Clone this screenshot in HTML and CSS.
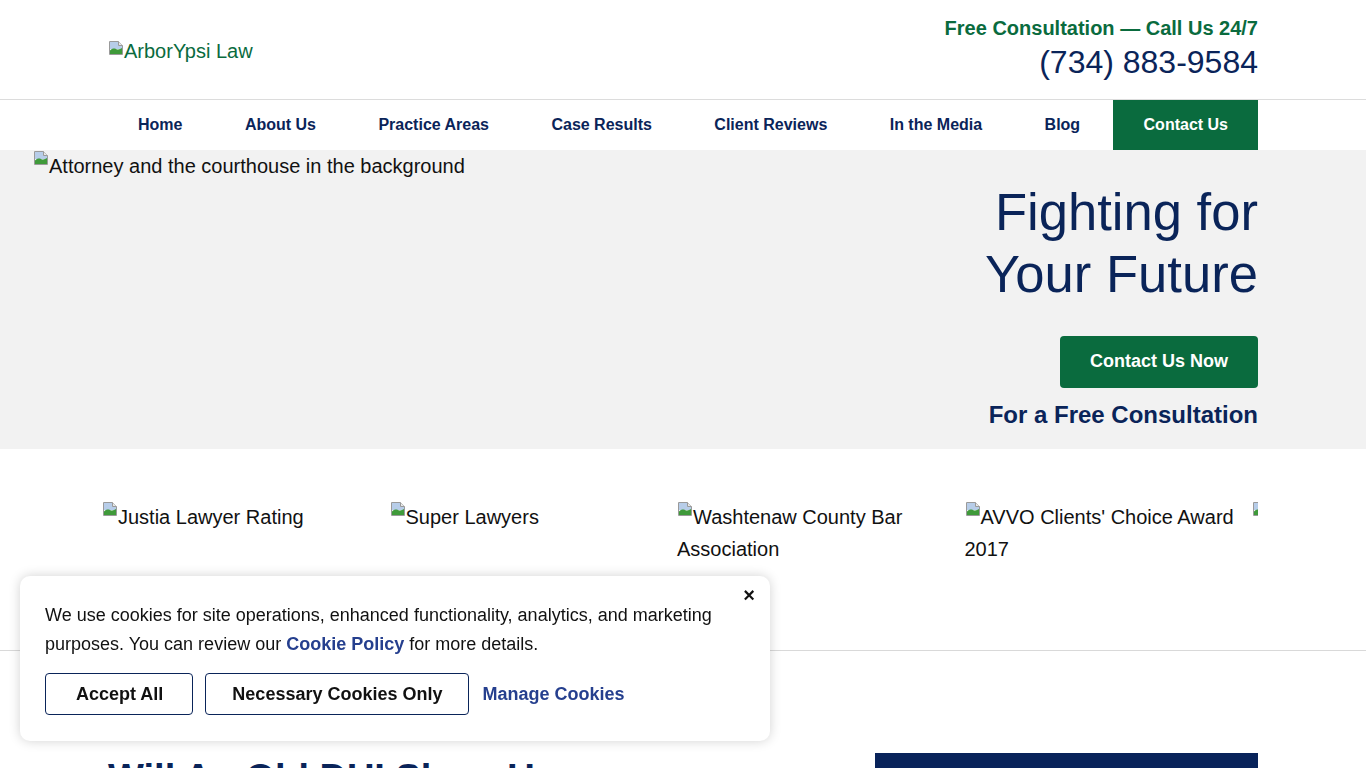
FILE: index.html
```html
<!DOCTYPE html>
<html lang="en">
<head>
<meta charset="utf-8">
<title>ArborYpsi Law</title>
<link rel="stylesheet" href="styles.css">
</head>
<body>
<header class="site-header">
  <div class="container header-inner">
    <a class="logo" href="#"><svg class="broken" viewBox="0 0 16 16" width="16" height="16"><path d="M1.5 1.5h9l4 4v9h-13z" fill="#fff" stroke="#9a9a9a"/><path d="M2 2h8.3l3.7 3.7V9H2z" fill="#b7cde9"/><path d="M2 14V10.5c2-2 4-2.5 6-1.5s4 .5 6-1V14z" fill="#3f9a3a"/><path d="M10.5 1.5v4h4" fill="#e8e8e8" stroke="#9a9a9a"/></svg>ArborYpsi Law</a>
    <div class="header-contact">
      <div class="consult">Free Consultation — Call Us 24/7</div>
      <a class="phone" href="#">(734) 883-9584</a>
    </div>
  </div>
</header>
<nav class="main-nav">
  <ul class="container nav-list">
    <li><a href="#">Home</a></li>
    <li><a href="#">About Us</a></li>
    <li><a href="#">Practice Areas</a></li>
    <li><a href="#">Case Results</a></li>
    <li><a href="#">Client Reviews</a></li>
    <li><a href="#">In the Media</a></li>
    <li><a href="#">Blog</a></li>
    <li class="nav-cta"><a href="#">Contact Us</a></li>
  </ul>
</nav>
<section class="hero">
  <div class="hero-img"><svg class="broken" viewBox="0 0 16 16" width="16" height="16"><path d="M1.5 1.5h9l4 4v9h-13z" fill="#fff" stroke="#9a9a9a"/><path d="M2 2h8.3l3.7 3.7V9H2z" fill="#b7cde9"/><path d="M2 14V10.5c2-2 4-2.5 6-1.5s4 .5 6-1V14z" fill="#3f9a3a"/><path d="M10.5 1.5v4h4" fill="#e8e8e8" stroke="#9a9a9a"/></svg>Attorney and the courthouse in the background</div>
  <div class="hero-content">
    <h1 class="hero-title">Fighting for<br>Your Future</h1>
    <a class="btn-green" href="#">Contact Us Now</a>
    <p class="hero-sub">For a Free Consultation</p>
  </div>
</section>
<section class="awards">
  <div class="container">
    <div class="awards-row">
      <div class="award"><svg class="broken" viewBox="0 0 16 16" width="16" height="16"><path d="M1.5 1.5h9l4 4v9h-13z" fill="#fff" stroke="#9a9a9a"/><path d="M2 2h8.3l3.7 3.7V9H2z" fill="#b7cde9"/><path d="M2 14V10.5c2-2 4-2.5 6-1.5s4 .5 6-1V14z" fill="#3f9a3a"/><path d="M10.5 1.5v4h4" fill="#e8e8e8" stroke="#9a9a9a"/></svg>Justia Lawyer Rating</div>
      <div class="award"><svg class="broken" viewBox="0 0 16 16" width="16" height="16"><path d="M1.5 1.5h9l4 4v9h-13z" fill="#fff" stroke="#9a9a9a"/><path d="M2 2h8.3l3.7 3.7V9H2z" fill="#b7cde9"/><path d="M2 14V10.5c2-2 4-2.5 6-1.5s4 .5 6-1V14z" fill="#3f9a3a"/><path d="M10.5 1.5v4h4" fill="#e8e8e8" stroke="#9a9a9a"/></svg>Super Lawyers</div>
      <div class="award"><svg class="broken" viewBox="0 0 16 16" width="16" height="16"><path d="M1.5 1.5h9l4 4v9h-13z" fill="#fff" stroke="#9a9a9a"/><path d="M2 2h8.3l3.7 3.7V9H2z" fill="#b7cde9"/><path d="M2 14V10.5c2-2 4-2.5 6-1.5s4 .5 6-1V14z" fill="#3f9a3a"/><path d="M10.5 1.5v4h4" fill="#e8e8e8" stroke="#9a9a9a"/></svg>Washtenaw County Bar Association</div>
      <div class="award"><svg class="broken" viewBox="0 0 16 16" width="16" height="16"><path d="M1.5 1.5h9l4 4v9h-13z" fill="#fff" stroke="#9a9a9a"/><path d="M2 2h8.3l3.7 3.7V9H2z" fill="#b7cde9"/><path d="M2 14V10.5c2-2 4-2.5 6-1.5s4 .5 6-1V14z" fill="#3f9a3a"/><path d="M10.5 1.5v4h4" fill="#e8e8e8" stroke="#9a9a9a"/></svg>AVVO Clients' Choice Award 2017</div>
      <div class="award"><svg class="broken" viewBox="0 0 16 16" width="16" height="16"><path d="M1.5 1.5h9l4 4v9h-13z" fill="#fff" stroke="#9a9a9a"/><path d="M2 2h8.3l3.7 3.7V9H2z" fill="#b7cde9"/><path d="M2 14V10.5c2-2 4-2.5 6-1.5s4 .5 6-1V14z" fill="#3f9a3a"/><path d="M10.5 1.5v4h4" fill="#e8e8e8" stroke="#9a9a9a"/></svg></div>
    </div>
  </div>
</section>
<main class="content">
  <div class="container content-grid">
    <article class="article">
      <h2 class="article-title">Will An Old DUI Show Up on a Background Check?</h2>
      <p>If you were convicted of drunk driving years ago, you may wonder whether it will still appear when an employer or landlord runs a background check.</p>
    </article>
    <aside class="sidebar">
      <div class="side-box">Get Your Free Consultation</div>
    </aside>
  </div>
</main>
<div class="cookie-banner">
  <button class="cookie-close" type="button">×</button>
  <p class="cookie-text">We use cookies for site operations, enhanced functionality, analytics, and marketing purposes. You can review our <a href="#">Cookie Policy</a> for more details.</p>
  <div class="cookie-actions">
    <button class="btn-outline btn-accept" type="button">Accept All</button>
    <button class="btn-outline btn-necessary" type="button">Necessary Cookies Only</button>
    <a class="cookie-manage" href="#">Manage Cookies</a>
  </div>
</div>
</body>
</html>
```
FILE: styles.css
```css
* { box-sizing: border-box; }
html, body { margin: 0; padding: 0; }
body {
  font-family: "Liberation Sans", Arial, sans-serif;
  color: #111;
  background: #fff;
  overflow: hidden;
}
a { text-decoration: none; }
.container { width: 1150px; margin: 0 auto; }
.broken { display: inline-block; vertical-align: top; flex: none; }

.site-header { border-bottom: 1px solid #dcdcdc; }
.header-inner {
  height: 99px;
  display: flex;
  align-items: center;
  justify-content: space-between;
}
.logo { color: #0a6b3e; font-size: 20px; line-height: 23px; display: flex; align-items: flex-start; margin-top: 3px; }
.header-contact { text-align: right; align-self: flex-start; margin-top: 16px; }
.consult { color: #0a6b3e; font-weight: bold; font-size: 20px; line-height: 24px; }
.phone { display: block; color: #0a2459; font-size: 32px; line-height: 38px; margin-top: 3px; }

.main-nav { height: 50px; }
.nav-list {
  list-style: none;
  padding: 0;
  margin: 0 auto;
  display: flex;
  justify-content: space-between;
  height: 50px;
}
.nav-list li a {
  display: block;
  padding: 0 30px;
  line-height: 50px;
  font-size: 16px;
  font-weight: bold;
  color: #0a2459;
}
.nav-list .nav-cta a { background: #0a6b3e; color: #fff; padding: 0 30px 0 31px; }

.hero {
  background: #f2f2f2;
  height: 299px;
  display: flex;
  justify-content: space-between;
  align-items: flex-start;
  padding: 0 108px 0 33px;
}
.hero-img { font-size: 20px; line-height: 32px; color: #111; display: flex; align-items: flex-start; }
.hero-content { text-align: right; padding-top: 31px; display: flex; flex-direction: column; align-items: flex-end; }
.hero-title {
  margin: 0;
  font-size: 52.6px;
  line-height: 62px;
  font-weight: normal;
  color: #0a2459;
}
.btn-green {
  margin-top: 31px;
  display: block;
  background: #0a6b3e;
  color: #fff;
  font-weight: bold;
  font-size: 18px;
  line-height: 23px;
  padding: 14px 30px 15px;
  border-radius: 4px;
}
.hero-sub {
  margin: 13px 0 0;
  font-size: 24px;
  line-height: 28px;
  font-weight: bold;
  color: #0a2459;
}

.awards { border-bottom: 1px solid #d9d9d9; height: 202px; padding-top: 52px; }
.awards-row {
  margin-left: -6px;
  width: 1156px;
  display: grid;
  grid-template-columns: repeat(5, 287.5px);
  overflow: hidden;
}
.award { font-size: 20px; line-height: 32px; color: #111; }

.content { padding-top: 104px; }
.content-grid { display: grid; grid-template-columns: 1fr 383px; column-gap: 40px; }
.article-title {
  margin: 0;
  font-size: 38px;
  line-height: 44px;
  color: #0a2459;
  padding-top: 1px;
}
.article p { font-size: 18px; line-height: 30px; }
.side-box {
  background: #08235a;
  color: #fff;
  height: 300px;
  padding: 30px;
  font-size: 24px;
  font-weight: bold;
  margin-top: -2px;
}

.cookie-banner {
  position: fixed;
  left: 20px;
  bottom: 27px;
  width: 750px;
  height: 165px;
  background: #fff;
  border-radius: 10px;
  box-shadow: 0 0 12px rgba(0,0,0,0.18);
  padding: 25px 25px 0;
}
.cookie-close {
  position: absolute;
  top: 9px;
  right: 15px;
  border: 0;
  background: none;
  font-family: "Liberation Sans", Arial, sans-serif;
  font-size: 20px;
  font-weight: bold;
  color: #111;
  padding: 0;
  line-height: 20px;
}
.cookie-text { margin: 0; font-size: 18px; line-height: 29px; color: #111; }
.cookie-text a { color: #253f8e; font-weight: bold; }
.cookie-actions { display: flex; align-items: center; margin-top: 14px; }
.btn-outline {
  font-family: "Liberation Sans", Arial, sans-serif;
  font-size: 18px;
  font-weight: bold;
  color: #111;
  background: #fff;
  border: 1px solid #0a2459;
  border-radius: 4px;
  height: 42px;
  margin-right: 12px;
}
.btn-accept { padding: 0 29px 0 30px; }
.btn-necessary { padding: 0 26px; margin-right: 13px; }
.cookie-manage { color: #253f8e; font-weight: bold; font-size: 18px; }
```
